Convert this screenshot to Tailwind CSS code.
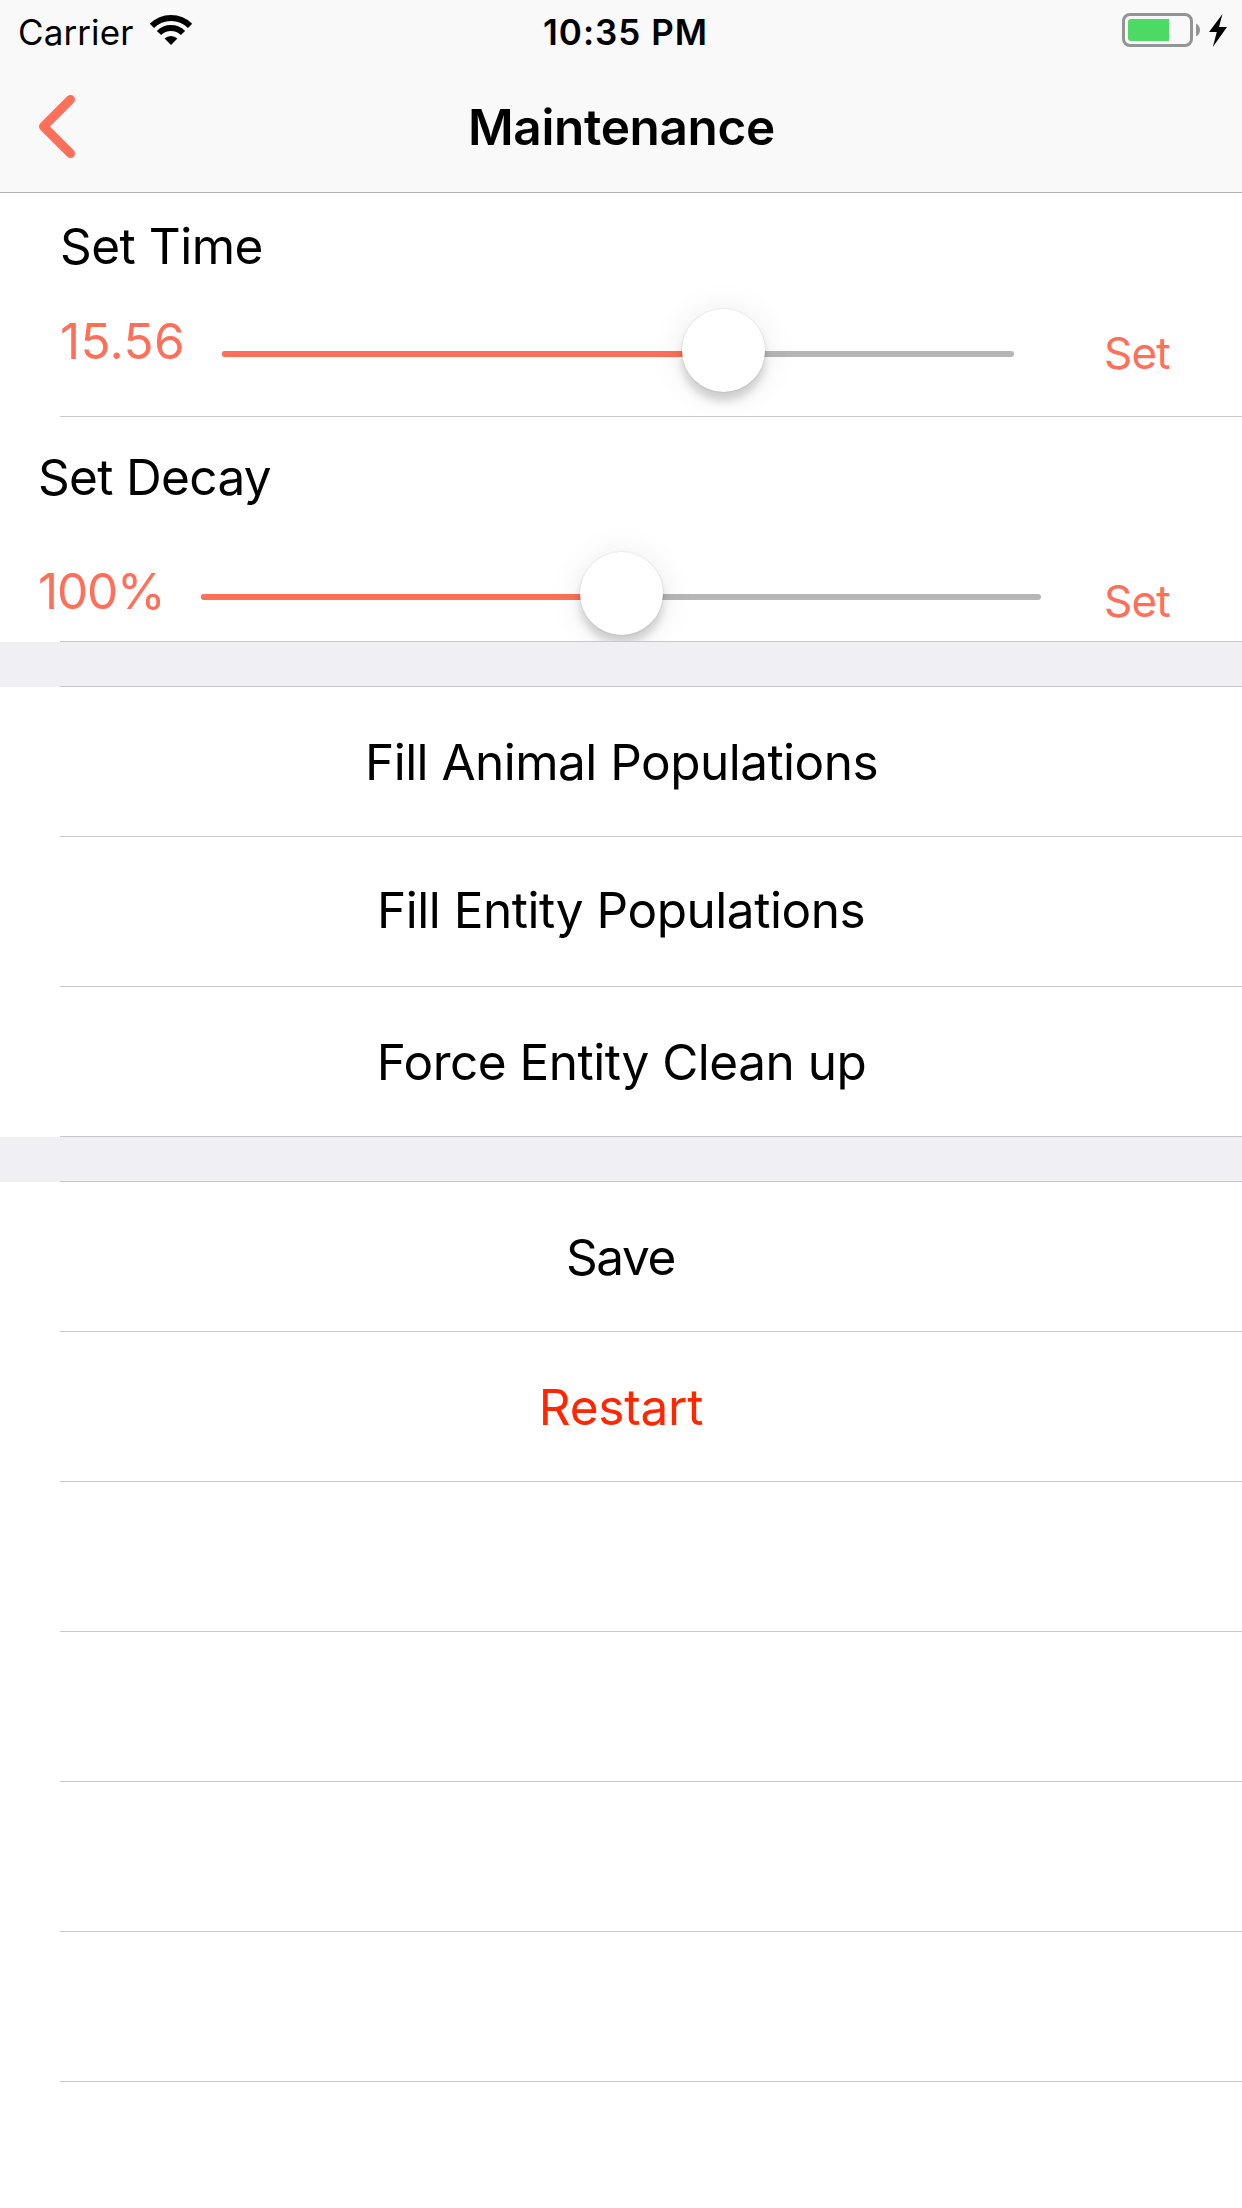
<!DOCTYPE html>
<html lang="en">
<head>
<meta charset="utf-8">
<title>Maintenance</title>
<script src="https://cdn.jsdelivr.net/npm/@tailwindcss/browser@4"></script>
</head>
<body class="h-[2208px] w-[1242px] overflow-hidden bg-white font-['Inter',sans-serif] text-[49.5px] leading-[60px] text-black">
  <header class="h-[193px] border-b border-[#b2b2b2] bg-[#f9f9f9]">
    <!-- Status bar -->
    <div class="grid h-[60px] grid-cols-[543px_1fr_auto] text-[35px]">
      <div class="flex pl-[18px]">
        <span class="w-[115px] pt-[2px] tracking-[0.1px]">Carrier</span>
        <svg class="mt-[14px] ml-[16px] h-[32px] w-[44px]" viewBox="149 14 44 32" fill="none" stroke="#000" stroke-width="6">
          <path d="M151.9 25.9A27 27 0 0 1 190.1 25.9"/>
          <path d="M159 33A17 17 0 0 1 183 33"/>
          <path d="M171 45L164.6 38.6A9 9 0 0 1 177.4 38.6Z" fill="#000" stroke="none"/>
        </svg>
      </div>
      <span class="pt-[2px] font-semibold tracking-[1px]">10:35 PM</span>
      <svg class="mt-[12px] mr-[13px] h-[36px] w-[108px]" viewBox="1121 12 108 36">
        <rect x="1123.5" y="14.5" width="68" height="31" rx="6.5" fill="none" stroke="#949494" stroke-width="3"/>
        <path d="M1131 19H1169V41H1131Q1128 41 1128 38V22Q1128 19 1131 19Z" fill="#4cd964"/>
        <path d="M1196 23.5Q1200 25.5 1200 30T1196 36.5Z" fill="#949494"/>
        <path d="M1222.5 14L1209 32H1216.8L1212.8 47L1227 27H1219Z" fill="#000"/>
      </svg>
    </div>
    <!-- Navigation bar -->
    <div class="grid h-[132px] grid-cols-[200px_1fr_200px]">
      <svg class="mt-[34px] ml-[38px] h-[66px] w-[38px]" viewBox="38 94 38 66" fill="none" stroke="#ff6f59" stroke-width="9" stroke-linecap="round" stroke-linejoin="round">
        <path d="M70.5 99.5L43.5 126.5L70.5 153.5"/>
      </svg>
      <h1 class="pt-[37px] pl-[1px] text-center font-semibold tracking-[-0.34px]">Maintenance</h1>
    </div>
  </header>

  <main>
    <section class="h-[223px] overflow-hidden pt-[23px] pl-[60px]">
      <div class="tracking-[-0.5px]">Set Time</div>
      <div class="flex items-start text-[#ff6f59]">
        <span class="mt-[35px] w-[162px] tracking-[0.36px]">15.56</span>
        <div class="relative mt-[33px] h-[84px] w-[792px] pt-[42px]">
          <div class="flex h-[6px] overflow-hidden rounded-full bg-[#b6b6b6]"><div class="w-[502px] bg-[#ff6f59]"></div></div>
          <div class="absolute top-0 left-[460px] size-[83px] rounded-full bg-white shadow-[0_0_1px_1px_rgba(0,0,0,0.05),0_9px_9px_rgba(0,0,0,0.16),0_3px_36px_rgba(0,0,0,0.09)]"></div>
        </div>
        <span class="mt-[47px] ml-[90px] text-[44px] tracking-[-0.79px]">Set</span>
      </div>
    </section>
    <div class="ml-[60px] h-px bg-[#c8c7cc]"></div>

    <section class="h-[224px] overflow-hidden pt-[30px] pl-[38px]">
      <div class="tracking-[-0.67px]">Set Decay</div>
      <div class="flex items-start text-[#ff6f59]">
        <span class="mt-[54px] w-[163px] tracking-[-1.2px]">100%</span>
        <div class="relative mt-[45px] h-[84px] w-[840px] pt-[42px]">
          <div class="flex h-[6px] overflow-hidden rounded-full bg-[#b6b6b6]"><div class="w-[421px] bg-[#ff6f59]"></div></div>
          <div class="absolute top-0 left-[379px] size-[83px] rounded-full bg-white shadow-[0_0_1px_1px_rgba(0,0,0,0.05),0_9px_9px_rgba(0,0,0,0.16),0_3px_36px_rgba(0,0,0,0.09)]"></div>
        </div>
        <span class="mt-[64px] ml-[63px] text-[44px] tracking-[-0.79px]">Set</span>
      </div>
    </section>
    <div class="ml-[60px] h-px bg-[#c8c7cc]"></div>

    <div class="h-[45px] bg-[#efeff4] pt-[44px] pl-[60px]"><div class="h-px bg-[#c8c7cc]"></div></div>

    <div class="h-[149px] pt-[45px] pl-[1px] text-center tracking-[-0.53px]">Fill Animal Populations</div>
    <div class="ml-[60px] h-px bg-[#c8c7cc]"></div>
    <div class="h-[149px] pt-[43px] text-center tracking-[-0.46px]">Fill Entity Populations</div>
    <div class="ml-[60px] h-px bg-[#c8c7cc]"></div>
    <div class="h-[149px] pt-[45px] pl-[1px] text-center tracking-[-0.5px]">Force Entity Clean up</div>
    <div class="ml-[60px] h-px bg-[#c8c7cc]"></div>

    <div class="h-[45px] bg-[#efeff4] pt-[44px] pl-[60px]"><div class="h-px bg-[#c8c7cc]"></div></div>

    <div class="h-[149px] pt-[45px] pr-[1px] text-center tracking-[-1.4px]">Save</div>
    <div class="ml-[60px] h-px bg-[#c8c7cc]"></div>
    <div class="h-[149px] pt-[45px] text-center tracking-[-0.2px] text-[#ff2600]">Restart</div>
    <div class="ml-[60px] h-px bg-[#c8c7cc]"></div>

    <!-- Empty rows -->
    <div class="ml-[60px] h-[150px] border-b border-[#c8c7cc]"></div>
    <div class="ml-[60px] h-[150px] border-b border-[#c8c7cc]"></div>
    <div class="ml-[60px] h-[150px] border-b border-[#c8c7cc]"></div>
    <div class="ml-[60px] h-[150px] border-b border-[#c8c7cc]"></div>
  </main>
</body>
</html>
